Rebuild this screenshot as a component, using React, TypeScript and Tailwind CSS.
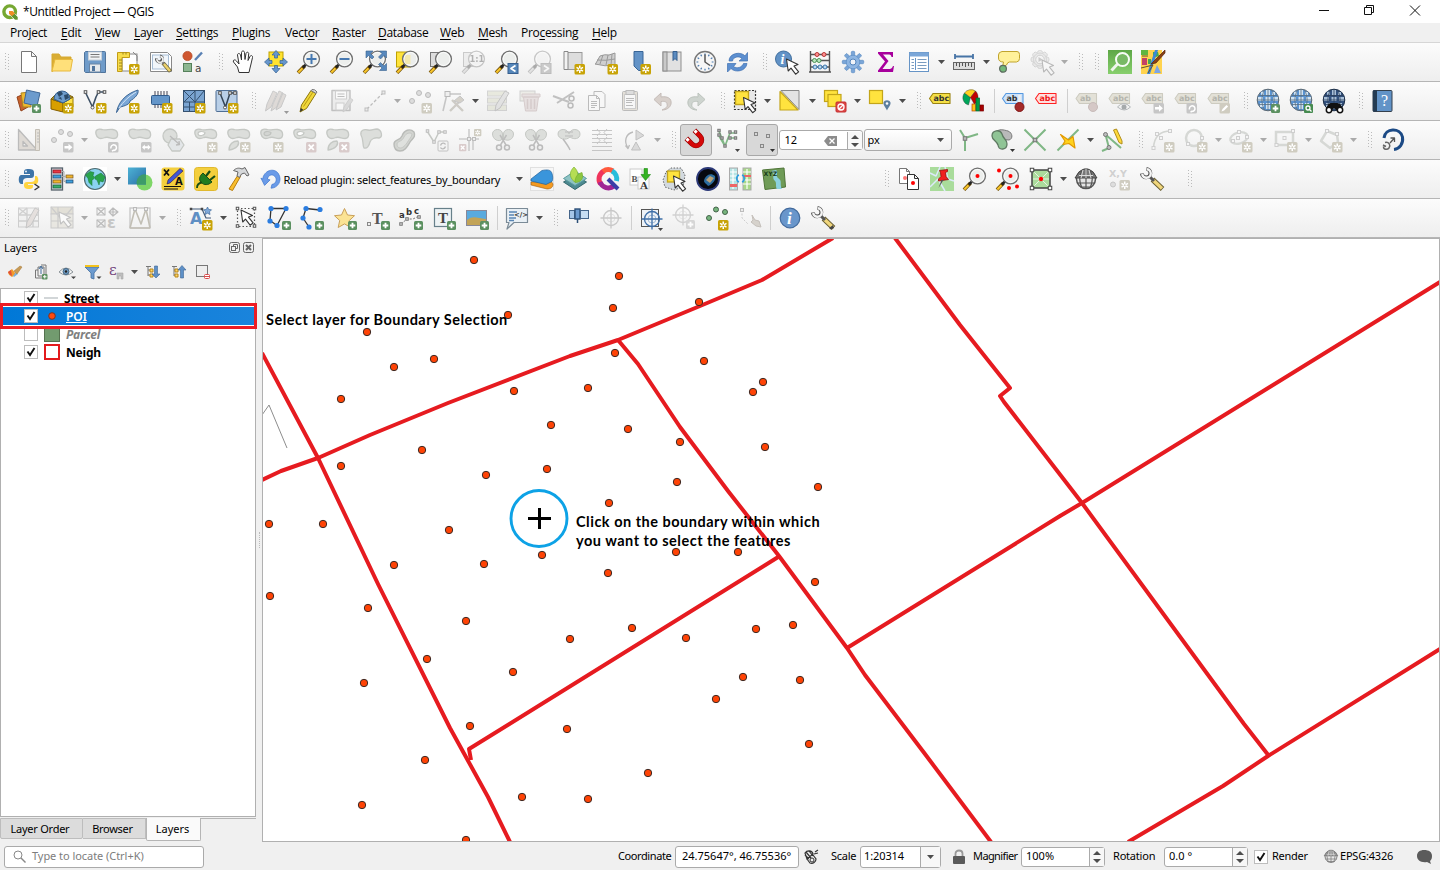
import React from "react";

type PProps = { d: string; f?: string; s?: string; w?: number; o?: number; dash?: string };
const P = ({ d, f = "none", s, w = 1, o, dash }: PProps) => (
  <path d={d} fill={f} stroke={s} strokeWidth={w} opacity={o} strokeDasharray={dash} strokeLinejoin="round" />
);
const C = ({ x, y, r, f = "none", s, w = 1 }: { x: number; y: number; r: number; f?: string; s?: string; w?: number }) => (
  <circle cx={x} cy={y} r={r} fill={f} stroke={s} strokeWidth={w} />
);
const R = ({ x, y, w, h, f = "none", s, r = 0, sw = 1 }: { x: number; y: number; w: number; h: number; f?: string; s?: string; r?: number; sw?: number }) => (
  <rect x={x} y={y} width={w} height={h} rx={r} fill={f} stroke={s} strokeWidth={sw} />
);
const T = ({ x, y, size, f = "#333", children, font = "DejaVu Sans", b = true, i = false }: { x: number; y: number; size: number; f?: string; children: string; font?: string; b?: boolean; i?: boolean }) => (
  <text x={x} y={y} fontSize={size} fill={f} fontFamily={`${font}, sans-serif`} fontWeight={b ? 700 : 400} fontStyle={i ? "italic" : "normal"}>{children}</text>
);

/* Badges in the lower right corner of an icon */
const Star = ({ off = false, x = 13, y = 14 }: { off?: boolean; x?: number; y?: number }) => (
  <g transform={`translate(${x} ${y})`}>
    <R x={0} y={0} w={10.5} h={10.5} r={1.5} f={off ? "#cfccc0" : "#c8a306"} />
    <P d="M5.25 1.5V9M2 3.4l6.5 3.7M8.5 3.4 2 7.1" s="#fff" w={1.5} />
    <C x={5.25} y={5.25} r={1} f={off ? "#cfccc0" : "#c8a306"} />
  </g>
);
const Plus = ({ off = false, x = 15, y = 15 }: { off?: boolean; x?: number; y?: number }) => (
  <g transform={`translate(${x} ${y})`}>
    <R x={0} y={0} w={9} h={9} r={1.5} f={off ? "#cfcfcf" : "#5b9060"} />
    <P d="M4.5 1.7v5.6M1.7 4.5h5.6" s="#fff" w={1.8} />
  </g>
);
const Badge = ({ k, x = 13, y = 14 }: { k: "arrow" | "turn" | "both" | "x" | "pen"; x?: number; y?: number }) => (
  <g transform={`translate(${x} ${y})`}>
    <R x={0} y={0} w={10.5} h={10.5} r={1.5} f={k === "x" ? "#d9cbcb" : k === "pen" ? "#cfccc0" : "#c6c6c6"} />
    {k === "arrow" && <P d="M1.5 4h4V1.8L9.4 5.3 5.5 8.7V6.5h-4z" f="#fff" />}
    {k === "turn" && <P d="M3 6.5a2.8 2.8 0 1 1 3 1.9M4 9.2l2-1.2" s="#fff" w={1.5} />}
    {k === "both" && <P d="M1 5.2 3.8 2.5v1.8h3V2.5l2.8 2.7-2.8 2.7V6.2h-3v1.7z" f="#fff" />}
    {k === "x" && <P d="M2.6 2.6l5.2 5.2M7.8 2.6 2.6 7.8" s="#fff" w={1.8} />}
    {k === "pen" && <P d="M2 8.5l1-2.5 4-4 1.6 1.6-4 4z" f="#fff" />}
  </g>
);
const Lens = ({ children, x = 14.5 }: { children?: React.ReactNode; x?: number }) => (
  <g>
    <P d="M1 22.8 7.5 16" s="#6b4a00" w={3.6} />
    <P d="M1.3 22.5 5.5 18.2" s="#f8c52c" w={2.2} />
    <P d="M6 17.500l3.300-3.400" s="#222" w={2.6} />
    <C x={x} y={9} r={7.9} f="#eceeec" s="#707070" w={1.4} />
    <C x={x} y={9} r={6.5} s="#fff" w={0.8} />
    {children}
  </g>
);
const Cursor = ({ x = 10, y = 8, f = "#fff", s = "#333" }: { x?: number; y?: number; f?: string; s?: string }) => (
  <g transform={`translate(${x} ${y})`}><P d="M0 0l1.700 12 2.800-2.800 4.600 6 3-2.300-4.600-5.800 4-1.700z" f={f} s={s} w={1.1} /></g>
);
const blob = "M1 6C0 2 3 .5 7 1.500c4 1.500 7-1 11 0 6 1 6 8.500 1 9-4 0-5-2-9-1-5 2-8 1-9-3.500z";
const Blob = ({ children }: { children?: React.ReactNode }) => (
  <g><P d={blob} f="#dcdedb" s="#c5c8c4" w={1.3} />{children}</g>
);
const Tag = ({ f = "#f5df46", s = "#9a8210", t = "#333", txt = "abc" }: { f?: string; s?: string; t?: string; txt?: string }) => (
  <g>
    <P d="M1.500 9.500 5 4.500h17v10H5z" f={f} s={s} w={1.1} />
    <T x={5.5} y={12.3} size={7.9} f={t}>{txt}</T>
  </g>
);
const Globe = ({ dark = false }: { dark?: boolean }) => (
  <g>
    <C x={12} y={11} r={10.8} f={dark ? "#33527f" : "#5a93d0"} s={dark ? "#1e3048" : "#5e6a73"} />
    <path d="M5 2.800h3v3H5zM10 1h4v5h-4zM16 3h3v3h-3zM2 8h5v4H2zM9.500 8h5v4h-5zM17 8h5v4h-5zM4 14h4v4H4zM10 14h4v6h-4zM16 14h4v3h-4z" fill={dark ? "#a8bfd8" : "#cfe2f2"} />
    <P d="M1 11h22M3 6.500h18M3 15.500h18M12 .5v21M8.500 1C5 8 5 14 8.500 21M15.500 1c3.500 7 3.500 13 0 20" s={dark ? "#2c405c" : "#596e80"} w={0.8} />
  </g>
);
const Wrench = ({ dark = false }: { dark?: boolean }) => (
  <g>
    <P d="M12.500 12.500 22.500 22" s="#665c30" w={5.2} />
    <P d="M13 13 22 21.500" s="#f0d67c" w={3.4} />
    <P d="M9 9l5 5" s="#555" w={3} />
    <P d="M1.800 6.500A4.300 4.300 0 1 0 6.500 1.800" s="#555" w={3.8} />
    <P d="M2.200 7A4.300 4.300 0 1 0 7 2.200" s="#f4f4f4" w={2.4} />
    {dark && <P d="M18 22l2 1.500 3-1.500-1-3z" f="#444" />}
  </g>
);
const Nodes = ({ pts, f = "#ececec", s = "#bdbdbd", z = 3 }: { pts: number[][]; f?: string; s?: string; z?: number }) => (
  <g>{pts.map(([x, y], i) => <R key={i} x={x - z / 2} y={y - z / 2} w={z} h={z} f={f} s={s} />)}</g>
);
const Snip = () => (
  <g>
    <P d="M1.500 6c0-6 10-6 10 0v5c-4 4-10 0-10-5zM12.500 6c0-6 10-6 10 0 0 5-5 8-10 5z" f="#dcdedb" s="#c5c8c4" />
    <P d="M15.500 7 9.500 17M9 7l6 10" s="#bdbdbd" w={1.5} />
    <C x={8} y={19.5} r={2.5} f="#eee" s="#bbb" w={1.5} /><C x={16} y={19.5} r={2.5} f="#eee" s="#bbb" w={1.5} />
  </g>
);
const Target = ({ s = "#3e6fa8" }: { s?: string }) => (
  <g><C x={12} y={12} r={7.500} s={s} w={1.300} /><C x={12} y={12} r={4} s={s} w={0.400} /><P d="M12 1.500v21M1.500 12h21" s={s} w={1.300} /></g>
);

const icons: Record<string, React.ReactNode> = {
  /* project */
  file: <P d="M4.500 1.500h10l5 5v16h-15zM14.500 1.500v5h5" f="#fff" s="#777" />,
  folder: <g><P d="M2 22V4h7l2 3h10v3" f="#d9ad34" s="#d7a92f" /><P d="M2 21 5 9.500h17.500L20.500 21z" f="#ffe07a" s="#e8b93c" /></g>,
  save: <g><P d="M2.500 1.500h19q1 0 1 1v20h-20l-1-1v-19z" f="#6f9bc9" s="#50749c" /><R x={5.500} y={2} w={13} h={8} f="#f1f3f5" s="#c9d1d9" /><P d="M7.500 4.500h9M7.500 7h9" s="#777" /><R x={6.500} y={14} w={11} h={8} f="#e6e9ec" s="#6985a5" /><R x={9} y={16} w={3} h={5} f="#50749c" /></g>,
  layoutNew: <g><R x={6} y={4} w={15} h={17} f="#fff" s="#888" /><P d="M1.500 2.500h12v5H6v14H1.500z" f="#f7dc4a" s="#c29c17" /><P d="M3 10h3M3 13h3M3 16h3M3 19h3M7 2.500v2M10 2.500v2" s="#8f7a20" w={0.9} /><P d="M17 2l4 4v5" s="#888" /><Star /></g>,
  layoutMgr: <g><P d="M1.500 2.500h17l4 4v15h-21z" f="#fff" s="#888" /><R x={3.500} y={5} w={16} h={14} f="#f1f6fb" s="#a7bdd5" /><P d="M14 13 21.500 21.500" s="#66603b" w={4} /><P d="M14.500 13.500 21 21" s="#eed36c" w={2.600} /><P d="M11 10l4 4" s="#777" w={2.200} /><P d="M7.500 8.500A3 3 0 1 0 11 6" s="#555" w={3} /><P d="M8 9A3 3 0 1 0 11.300 6.500" s="#eee" w={1.800} /></g>,
  style: <g><C x={5.500} y={6} r={4.600} f="#cf5730" s="#b0431f" w={0.700} /><P d="M13 10 20 2.500" s="#5981b4" w={2.400} /><R x={1.500} y={13.500} w={8} h={8} f="#8cb690" s="#55805a" /><T x={13} y={22} size={10.500} f="#444" b={false}>a</T></g>,
  /* navigation */
  hand: <P d="M8 22.500 6.500 17 2.500 12c-1-2 1.500-3 3-1l2.500 3L6.500 5c0-2 2.500-2 3 0l1 5V2.500c0-2 3-2 3 0l.5 7 1-6c.5-2 3-1.500 2.700.5L17 10.500l2-4c1-2 3-.5 2.500 1L20 14l-1 4-1 4.500z" f="#fff" s="#333" />,
  pan: <g><R x={5} y={2} w={14} h={14} f="#ffe22f" s="#bfa200" /><P d="M12 .5 16 5h-2.500v3h-3V5H8zM12 23l4-4.500h-2.500v-3h-3v3H8zM.5 12 5 8v2.500h3v3H5V16zM23.500 12 19 8v2.500h-3v3h3V16z" f="#6696cc" s="#356194" w={0.700} /></g>,
  zoomIn: <Lens><P d="M14.500 4v10M9.500 9h10" s="#4779b1" w={2} /></Lens>,
  zoomOut: <Lens><P d="M9.500 9h10" s="#4779b1" w={2} /></Lens>,
  zoomFull: <g><Lens x={14.500} /><P d="M3 1h7L7.500 3.500 11 7 9 9 5.500 5.500 3 8zM23.500 1h-7L19 3.500 15.500 7l2 2L21 5.500 23.500 8zM23.500 20.500h-7L19 18l-3.500-3.500 2-2L21 16l2.500-2.500z" f="#5788bd" s="#37618e" w={0.600} /></g>,
  zoomSel: <g><R x={.5} y={2} w={14} h={15} f="#ffe33b" s="#bfa200" /><Lens /><P d="M10 5h4.500v9H10q-3-4.500 0-9z" f="#f3e9b0" /></g>,
  zoomLayer: <g><R x={1.500} y={2.500} w={14} h={14} f="#ddd" s="#777" /><Lens /></g>,
  zoomNative: <g opacity={.35}><R x={1.500} y={2.500} w={14} h={14} f="#ddd" s="#777" /><g className="grayscale"><Lens><T x={7.500} y={12} size={8.300} f="#333">1:1</T></Lens></g></g>,
  zoomLast: <g><Lens /><R x={13} y={13.500} w={10} h={10} f="#5586b9" s="#365f8f" /><P d="M20.500 15.500 16 18.500l4.500 3" s="#fff" w={1.700} /></g>,
  zoomNext: <g opacity={.35} className="grayscale"><Lens /><R x={13} y={13.500} w={10} h={10} f="#5586b9" s="#365f8f" /><P d="M16 15.500 20.500 18.500l-4.500 3" s="#fff" w={1.700} /></g>,
  mapNew: <g><R x={6} y={2.500} w={15} h={17} f="#ddd" s="#999" /><P d="M3 1.500h4v18H3z" f="#f2f2f2" s="#888" /><Star x={13.500} /></g>,
  map3d: <g><P d="M1.500 14 6 6q5-2 9-1l6-2v12q-10 2-20-1z" f="#cfcfcf" s="#999" /><P d="M3 10q9 1 18-1M9 5 6 14M14 5l-2 10M18 4l-1 11" s="#9a9a9a" /><Star x={13.500} /></g>,
  bookmarkNew: <g><P d="M7 1.500h9v19h-4.500L7 16z" f="#6393c7" s="#386596" /><Star x={13.500} /></g>,
  bookmarks: <g><R x={3} y={2} w={18} h={19} f="#e1e1e1" s="#8d8d8d" /><R x={3} y={2} w={4} h={19} f="#c9c9c9" s="#8d8d8d" /><P d="M13 1.500h4v9l-2-2-2 2z" f="#5b8bc0" s="#345f8f" /></g>,
  clock: <g><C x={12} y={12} r={10.500} f="#f6f6f6" s="#777" w={1.400} />{[0, 30, 60, 90, 120, 150].map(a => <path key={a} d="M12 3.500v1.800M12 18.700v1.800" stroke="#4878ae" strokeWidth="1.200" transform={`rotate(${a} 12 12)`} />)}<P d="M12 4.500V12l5 3.500" s="#555" w={1.500} /></g>,
  refresh: <g><P d="M3 11C3 3 15 1 19 6l2.500-3.500V11H13l3-2.500C13 5.500 7 7 6.500 11zM21 13.500C20 21.500 9 23 5 18.500L1.500 22v-8.500H10L7.500 16.500C11 19 16 17.500 17.500 13.500z" f="#5c8fd0" s="#3f70b0" w={0.700} /></g>,
  /* attributes */
  identify: <g><C x={8.500} y={9} r={8} f="#6192c6" s="#44719f" /><T x={5.500} y={14} size={14} f="#fff" font="Liberation Serif" i>i</T><Cursor x={11.500} y={9} /></g>,
  abacus: <g><P d="M2.500 1v21.500M21.500 1v21.500M1 22h22M3 4.500h18M3 10.500h18M3 17h18" s="#555" w={1.400} />{[9, 16].map(x => <C key={x} x={x} y={4.500} r={2} f="#ff9090" s="#b63535" />)}{[6.500, 11].map(x => <C key={x} x={x} y={10.500} r={2} f="#b8e6bd" s="#4d9459" />)}{[7, 12, 17].map(x => <C key={x} x={x} y={17} r={2} f="#b9d8f1" s="#3b76ac" />)}</g>,
  gear: <g>{[0, 45, 90, 135].map(a => <rect key={a} x={10.300} y={1.300} width={3.400} height={21.400} rx={1} fill="#7ba6d8" stroke="#5385bd" strokeWidth={.6} transform={`rotate(${a} 12 12)`} />)}<C x={12} y={12} r={6.800} f="#8db5e2" s="#5f90c8" w={.8} /><C x={12} y={12} r={3} f="#f0f4f9" s="#5385bd" /></g>,
  sigma: <P d="M4 2h15v5h-1.500c-.5-2-1-2.500-4-2.500H9l5.500 6.500L8.500 19H14c3 0 4-.5 5-3h1l-1 6H4v-1.500l7-9L4 3.500z" f="#a7009c" />,
  table: <g><R x={2.500} y={2.500} w={19} h={19} f="#fff" s="#6694c6" /><R x={2.500} y={2.500} w={19} h={4} f="#7aa6d8" /><P d="M8.500 8v12" s="#6694c6" /><P d="M4.500 9.500H7M4.500 12.500H7M4.500 15.500H7M4.500 18.500H7M10.500 9.500h9M10.500 12.500h9M10.500 15.500h9M10.500 18.500h9" s="#7a9cc0" /></g>,
  measure: <g><P d="M2.500 6.500h19M3 4v5M21 4v5" s="#4774a6" w={1.800} /><R x={1.500} y={12.500} w={21} h={7} f="#ddd" s="#666" /><P d="M4.500 13v3M7.500 13v4M10.500 13v3M13.500 13v4M16.500 13v3M19.500 13v4" s="#555" /></g>,
  tip: <g><P d="M5 1.500h15q2.500 0 2.500 3v4q0 3-3 3.500h-7q-2 0-3 3l-4 2 1-5q-5 0-5-4v-3q0-3 3.500-3.500z" f="#fff19a" s="#c0a42e" /><C x={6} y={18.800} r={3.400} f="#72b879" s="#5d6b5f" w={1.200} /></g>,
  action: <g opacity={.3}>{[0, 45, 90, 135].map(a => <rect key={a} x={7.500} y={.5} width={5} height={18} rx={2} fill="#ccc" stroke="#777" strokeWidth={.8} transform={`rotate(${a} 10 9.500)`} />)}<C x={10} y={9.500} r={6.500} f="#ccc" s="#888" /><C x={10} y={9.500} r={4.300} f="#eee" s="#777" /><P d="M8.500 7v5l4-2.500z" f="#666" /><Cursor x={12} y={10} /></g>,
  osm: <g><defs><linearGradient id="gq" x2="0" y2="1"><stop stopColor="#5ea747" /><stop offset="1" stopColor="#87cf6d" /></linearGradient></defs><rect width="24" height="24" x="1" fill="url(#gq)" /><P d="M4.500 20.500 10.500 14" s="#eef6ec" w={3} /><C x={15.500} y={9.500} r={6.500} f="#78b965" s="#f7fcf6" w={2} /></g>,
  quickmap: <g transform="translate(1 0)"><rect width="21" height="24" fill="#ffd34e" /><path d="M0 0h7v5H0z" fill="#61b53f" /><path d="M1 8h5v7H1z" fill="#c34265" /><path d="M7 9h3v5H7zM12 2h5l1 4-6 2z" fill="#42a955" /><path d="M14 0h3l-4 12-4 12H6l4-12z" fill="#3d87d7" /><path d="M16 15l4 8h-7z" fill="#7da6e5" /><P d="M0 18 12 15 7 23M1 6h6" s="#65522f" /><P d="M24 0 13 11l-3 3 5-1L24 3z" f="#8b4113" s="#54230c" w={0.700} /></g>,
  /* data source */
  dsm: <g><P d="M0 8 7 5l4 13-7 4z" f="#c9632c" s="#93421c" /><P d="M4 4 13 3l1 15H6z" f="#efb92f" s="#ad8321" /><P d="M9.500 1 23 4l-3 13L7 14z" f="#6c9bcd" s="#3f6796" /><Plus x={15} y={15} /></g>,
  geopkg: <g><P d="M1 10 13 14v9L1 20z" f="#d89f00" s="#855f00" /><P d="M13 14 23 8v10l-10 5z" f="#ffe34b" s="#977800" /><P d="M1 10 5 6h14l4 2-10 6z" f="#b38f16" s="#7a6010" /><path d="M4 10a8 8 0 1 1 16 0l-7 4z" fill="#6d9ccc" stroke="#34608f" /><P d="M7 4l4-2 2 3-4 3zM14 6l4-1 1 4-4 2zM8 9l3-1 1 3z" f="#2c4a69" /><Star /></g>,
  shpNew: <g><P d="M2.500 3.500 9.500 18 13 8 15.500 3h6" s="#3d5065" w={1.600} /><Nodes pts={[[2.500, 3], [15.500, 3], [21.500, 3]]} f="#fff" s="#555" z={2.600} /><C x={9.500} y={18.500} r={1.500} f="#fff" s="#555" /><Star /></g>,
  feather: <g><P d="M.5 23.500C2 14 9 5 22 1c1 4-3 8-8 11 0 3-5 5-10 6z" f="#7ba7d6" s="#3c6695" /><P d="M3 19C7 13 13 7 20 3" s="#d5e5f5" /><Star /></g>,
  chip: <g><P d="M6 2v17M9 2v17M12 2v17M15 2v17M18 2v17" s="#445" w={1} /><R x={2.500} y={6.500} w={18} h={9} r={1} f="#6496ca" s="#315b8b" /><Star x={13} y={14} /></g>,
  mesh: <g><R x={1.500} y={1.500} w={21} h={21} f="#7ba5d2" s="#34506f" /><P d="M1.500 13h21M13 1.500v21M2 2l11 11M13 2 2 13M22 2 13 13M7.500 13v10M1.500 18h11" s="#34506f" w={1} /><Star /></g>,
  virtualLayer: <g><R x={1} y={1.500} w={21} h={21} r={1} f="#b9cfe7" s="#4f6f95" /><P d="M5 4l5.500 14L15 4h5" s="#345" w={1.500} /><Nodes pts={[[5, 4], [15, 4], [20, 4]]} f="#fff" s="#555" z={2.600} /><C x={10} y={18.500} r={1.500} f="#fff" s="#555" /><Star /></g>,
  /* digitizing */
  editsOff: <g><g opacity={.35}><P d="M1.500 22 3 15 9 2l4 2-6 14zM7 22l2-7 6-13 4 2-6 14zM12 21l2-7 4-10 4 2-5 12z" f="#b5aaa2" s="#777" /></g><P d="M20 22h5l-2.500 3z" f="#999" /></g>,
  pencil: <g><P d="M3 23 4.500 16 14 1.500l5 3L9.500 19.500z" f="#f0d73a" s="#8d760d" /><P d="M14 1.500l5 3 1-1.500q-2-3-5-2.500z" f="#ddd" s="#777" /><P d="M6.500 17.500 16 3" s="#b99b12" /><P d="M3 23l.8-4 2.500 1.800z" f="#333" /></g>,
  saveEdits: <g opacity={.35} className="grayscale"><P d="M2 1.500h18v20H2z" f="#ddd" s="#666" w={1.500} /><R x={5.500} y={2} w={11} h={8} f="#fff" s="#888" /><P d="M7.500 5h7M7.500 7.500h7" s="#555" /><R x={6} y={14} w={8} h={7} f="#fff" s="#888" /><P d="M13 23l1-5 6-9 3 2-6 9z" f="#aaa" s="#888" /></g>,
  line: <g><P d="M4 20 20 4" s="#bbb" w={1.300} dash="3 2" /><Nodes pts={[[3.500, 20.500], [20.500, 3.500]]} /></g>,
  points: <g><C x={11} y={4} r={2.500} f="#ddd" s="#bbb" /><C x={20} y={6} r={2.500} f="#ddd" s="#bbb" /><C x={4} y={12} r={2.500} f="#ddd" s="#bbb" /><Star off x={13.500} /></g>,
  vertex: <g opacity={.8}><P d="M2 22 6 5h14" s="#bbb" w={1.600} /><P d="M11 11 22 22M19 12 9 22" s="#c5c2bb" w={2.400} /><R x={4} y={2.500} w={5} h={5} f="#eee" s="#aaa" /><P d="M13 12l6-5 4 4-4 3z" f="#ccc8bf" s="#bbb" /></g>,
  formEdit: <g opacity={.45}><R x={1.500} y={2} w={19} h={5} f="#d5d7c0" s="#aaa" /><R x={1.500} y={9} w={19} h={5} f="#d5d7c0" s="#aaa" /><R x={1.500} y={16} w={19} h={5.500} f="#d5d7c0" s="#aaa" /><P d="M9 22l1-6 9-14 4 2-9 15z" f="#ccc" s="#888" /></g>,
  trash: <g opacity={.5}><R x={1} y={2} w={15} h={10} f="#e2e2d8" s="#aaa" /><P d="M4.500 8h15l-2 14h-11zM3 5h18v3H3z" f="#d9cccc" s="#b8a4a4" /><P d="M8.500 10v10M12 10v10M15.500 10v10" s="#b8a4a4" w={1.500} /></g>,
  cut: <g><P d="M1 7l16 6M5 14 22 3" s="#c1c1c1" w={2} /><C x={19.500} y={9.500} r={2.500} s="#bbb" w={1.500} /><C x={18.500} y={16.500} r={2.500} s="#bbb" w={1.500} /></g>,
  copy: <g><P d="M9 2.500h8l3 3v13H9z" f="#f7f7f7" s="#bbb" /><P d="M3.500 6.500h8l3 3v12h-11zM11.500 6.500v3h3" f="#f7f7f7" s="#bbb" /><P d="M6 12.500h6M6 14.500h6M6 16.500h6M6 18.500h4" s="#bbb" /></g>,
  paste: <g><R x={4.500} y={2.500} w={15} h={19} r={1} f="#e4e0d8" s="#bbb" /><R x={6.500} y={5.500} w={11} h={14} f="#f7f7f7" s="#ccc" /><R x={8} y={1.500} w={8} h={4} f="#ddd" s="#bbb" /><P d="M8 9.500h8M8 11.500h8M8 13.500h6M8 16.500h7" s="#bbb" /></g>,
  undo: <P d="M3 10.500 10 4v4c6-1 11 1 10 7-1 4-5 6-9 6 4-2 6-3 5-6 0-2-2-3-6-2.500v4.500z" f="#d8d0cb" s="#c4bcb8" />,
  redo: <P d="M21 10.500 14 4v4C8 7 3 9 4 15c1 4 5 6 9 6-4-2-6-3-5-6 0-2 2-3 6-2.500v4.500z" f="#ced4cf" s="#bcc3bd" />,
  /* selection */
  select: <g><R x={1.500} y={1.500} w={21} h={19} f="#e8e8e8" /><rect x={1.500} y={1.500} width={21} height={19} fill="none" stroke="#333" strokeDasharray="2 1.500" strokeWidth={1.200} /><R x={2.500} y={2.500} w={13} h={13} f="#ffe33e" s="#c3a51a" sw={1.400} /><Cursor x={10.500} y={8.500} /></g>,
  selectValue: <g><P d="M3 1.500h18v19z" f="#e3e3e3" s="#888" /><P d="M2 2.500 20 21H2z" f="#ffe33e" s="#c3a51a" w={1.200} /></g>,
  deselect: <g><R x={1.500} y={1.500} w={13} h={11} f="#ffe33e" s="#c3a51a" sw={1.200} /><R x={5} y={5.500} w={13} h={12} f="#ffe33e" s="#c3a51a" sw={1.200} /><R x={13} y={13} w={10} h={10} r={1} f="#df4747" s="#c22f2f" /><C x={18} y={18} r={3} s="#fff" w={1.300} /><P d="M16 20l4-4" s="#fff" w={1.300} /></g>,
  selectLoc: <g><R x={1.500} y={1.500} w={13} h={13} f="#ffe33e" s="#c3a51a" sw={1.200} /><P d="M19 21.500c-1-3-4-5-3.500-8 1-3 6-3 7 0 .5 3-2.500 5-3.500 8z" f="#5d7f9f" /><C x={19} y={14.500} r={1.300} f="#fff" /></g>,
  /* labels */
  label: <g transform="translate(-1 0)"><Tag /></g>,
  diagram: <g><P d="M8.500 8.500 2.500 4a7.500 7.500 0 0 0 4 12z" f="#00a65a" s="#333" w={.4} /><P d="M8.500 8.500 2.500 4a8 8 0 0 1 11-2z" f="#ffd21f" s="#333" w={.4} /><P d="M8.500 8.500l5-6.500c4 4 3 10-1 13.500z" f="#c40000" s="#333" w={.4} /><R x={10} y={15} w={3.500} h={7} f="#ffc415" s="#b40" sw={.7} /><R x={14} y={9} w={3.500} h={13} f="#009a43" s="#063" sw={.7} /><R x={18} y={16} w={3.500} h={6} f="#a80000" s="#700" sw={.7} /></g>,
  labelPin: <g transform="translate(-1 0)"><Tag f="#cfe3f9" s="#5598e0" txt="ab" /><P d="M18.500 6v10" s="#eee" w={2.500} /><C x={18.500} y={18} r={4.500} f="#a52929" s="#7e1515" /></g>,
  labelRed: <g transform="translate(-1 0)"><Tag f="#ffdede" s="#f22" t="#f01818" /></g>,
  /* web and help */
  globeAdd: <g><Globe /><Plus x={15} y={15} /></g>,
  globeSearch: <g><Globe /><R x={15} y={15} w={9} h={9} r={1} f="#468b50" /><C x={19} y={19} r={2} s="#fff" w={1.300} /><P d="M20.500 20.500l2 2" s="#fff" w={1.300} /></g>,
  globeBino: <g><Globe dark /><P d="M4 22c0-5 3-8 5-8h6c3 0 6 3 5 8l-6-1-2-2-2 2z" f="#111" /><C x={7} y={21} r={2.700} f="#fff" s="#111" w={1.500} /><C x={18} y={21} r={2.700} f="#fff" s="#111" w={1.500} /></g>,
  help: <g><R x={2} y={1.500} w={19} h={21} r={1} f="#6293c7" s="#333f4c" /><R x={2} y={1.500} w={4} h={21} f="#243b52" /><T x={10} y={17} size={16} f="#fff" font="Liberation Serif" b={false}>?</T></g>,
  /* advanced digitizing */
  setSquare: <g><P d="M1.500 1.500 20 22H1.500zM6 13.500v4.500h4.500z" f="#dedad5" s="#bbb" w={1.300} /><P d="M18.500 1.500h4v21h-4z" f="#e5e1da" s="#c3beb5" /><P d="M20 5h2M20 8h2M20 11h2M20 14h2" s="#bbb" /></g>,
  movePts: <g><C x={11} y={4} r={2.500} f="#ddd" s="#bbb" /><C x={20} y={6} r={2.500} f="#ddd" s="#bbb" /><C x={4} y={12} r={2.500} f="#ddd" s="#bbb" /><Badge k="arrow" /></g>,
  rotate: <Blob><Badge k="turn" /></Blob>,
  scale: <Blob><Badge k="both" /></Blob>,
  simplify: <g><C x={9} y={8} r={7} f="#dcdedb" s="#c5c8c4" w={1.300} /><P d="M10 11h9l4 6-4 6h-8l-4-6z" f="#e3e6e8" s="#c5c8c4" w={1.300} /><P d="M9 8l9 8M15 17l3.500-.5L18 13" s="#bbb" w={1.300} /></g>,
  ringAdd: <Blob><P d="M4 6c0-3 4-3 7-1.500 0 3-6 4.500-7 1.500z" f="#fff" s="#c5c8c4" w={1.200} /><Star off /></Blob>,
  partAdd: <Blob><P d="M2 22c0-6 4-9 9-9 2 3-1 8-9 9z" f="#dcdedb" s="#c5c8c4" w={1.300} /><Star off /></Blob>,
  ringFill: <Blob><P d="M4 6c0-3 4-3 7-1.500 0 3-6 4.500-7 1.500z" f="#d3d5d2" s="#c0c3bf" w={1.200} /><Star off /></Blob>,
  ringDel: <Blob><P d="M4 6c0-3 4-3 7-1.500 0 3-6 4.500-7 1.500z" f="#fff" s="#c5c8c4" w={1.200} /><Badge k="x" /></Blob>,
  partDel: <Blob><P d="M2 22c0-6 4-9 9-9 2 3-1 8-9 9z" f="#dcdedb" s="#c5c8c4" w={1.300} /><Badge k="x" /></Blob>,
  reshape: <P d="M2 7C1 2 5 1 9 2c4 1 5-1 9-1 5 1 6 8 2 9-4-1-8 1-9 4-1 4-3 7-6 6-2-4 0-8-3-13z" f="#dcdedb" s="#c5c8c4" w={1.300} />,
  offset: <g><P d="M2 16c0-5 6-3 8-8 2-6 8-8 12-4 2 5-1 6-4 10-3 5-5 9-10 9-4 0-6-3-6-7z" f="#d2d4d0" s="#b9bbb8" w={1.400} /><P d="M5 16c0-3 5-2 7-7 2-4 6-5 8-3 0 3-3 5-5 9-3 4-5 5-7 5s-3-2-3-4z" f="#dfe1de" s="#c5c7c4" /></g>,
  reverse: <g><P d="M2 3l7 11 5-10h6" s="#c5c8c4" w={1.500} /><Nodes pts={[[2.500, 3], [14, 4], [20, 4], [9, 14]]} z={2.500} /><R x={13} y={13} w={10} h={10} r={1} f="#f3f3f3" s="#c2c2c2" /><P d="M15.500 17.500c1-3 4-3 5-1M20.500 18.500c-1 3-4 3-5 1" s="#bbb" w={1.400} /></g>,
  trim: <g><P d="M11 1v22M1 11h20M15 11v11" s="#ccc" w={1.600} /><Nodes pts={[[11, 11], [16, 11]]} /><g transform="translate(16 1) scale(.7)"><Star off x={0} y={0} /></g><g transform="translate(1 16) scale(.7)"><Badge k="x" x={0} y={0} /></g></g>,
  split: <Snip />,
  splitParts: <Snip />,
  merge: <g><P d="M1 6c0-6 10-6 11 0 1-6 11-6 11 0 0 5-6 6-10 3-4 4-12 2-12-3z" f="#dcdedb" s="#c5c8c4" /><P d="M8 4h8M8 8h8" s="#bbb" /><P d="M6 11q6 8 7 11" s="#bbb" w={1.500} /></g>,
  mergeAttr: <P d="M2 2.500h20M2 6.500h20M2 10.500h20M2 14.500h20M2 18.500h20M2 22.500h20M7 1l3 3.500L7 8M17 1l-3 3.500L17 8M7 9l3 3.500L7 16M17 9l-3 3.500 3 3.500" s="#c6c6c6" />,
  rotateSym: <g><P d="M13 2l8 5.500-8 4.500zM13 14l4.500 8h-9z" f="#dadada" s="#c0c0c0" /><P d="M10 4C2 6 1 14 5 20M2.500 17.500 5 20.500 6.500 17" s="#bbb" w={1.300} /></g>,
  /* snapping */
  magnet: <g transform="rotate(-45 12 12)"><P d="M6.300 4v8a5.700 5.700 0 0 0 11.400 0V4" s="#8a0000" w={5} /><P d="M6.300 4.500V12a5.700 5.700 0 0 0 11.400 0V4.500" s="#d40808" w={4} /><path d="M4.800 4.300h3v3h-3zM16.200 4.300h3v3h-3z" fill="#fff" /></g>,
  snapV: <g><P d="M3 3l6 15 5-13h7M3 8l6 10M14 10h7" s="#7fb785" w={1.700} /><Nodes pts={[[3, 2.500], [3, 7], [6, 10], [14, 4], [19.500, 4], [14, 10], [19.500, 10], [9, 18]]} f="#bbb" s="#777" z={2.400} /><P d="M19 21h5l-2.500 3z" f="#444" /></g>,
  snapPts: <g><Nodes pts={[[6, 6], [18, 8], [12, 18]]} f="#d5d5d5" s="#888" z={3} /><P d="M20 21h5l-2.500 3z" f="#333" /></g>,
  topo: <g><P d="M3 2l5 8 13-4M8 10v13" s="#7fb785" w={2} /><Nodes pts={[[8, 10.500]]} f="#bbb" s="#777" z={3.500} /></g>,
  overlap: <g><P d="M6 5C8 0 14 2 18 3c5 2 5 8 1 9-5 0-8-2-12-2z" f="#b9b9b9" s="#777" /><P d="M2 8c0-6 8-7 10-2 1 5 5 5 5 10 0 6-8 7-9 1-1-4-6-5-6-9z" f="#8fc495" s="#5f7a62" w={1.300} /><P d="M20 21h5l-2.500 3z" f="#333" /></g>,
  intersect: <g><P d="M1.500 1.500 22.500 22.500M22.500 1.500 1.500 22.500" s="#7fb785" w={2} /><Nodes pts={[[12, 12]]} f="#bbb" s="#777" z={3.500} /></g>,
  trace: <g><P d="M22.500 1.500 1.500 22.500" s="#7fb785" w={2} /><P d="M4.500 6.500 12.500 12 17 8.500 19 20 13 15.500 7 16.500 9 13z" f="#ffd21d" s="#e39a00" w={1.200} /></g>,
  selfSnap: <g><P d="M1 23 8 20 4.500 6.500 20 20" s="#7fb785" w={2} /><C x={4.500} y={6.500} r={2} f="#bbb" s="#777" /><C x={8} y={19.500} r={2} f="#bbb" s="#777" /><P d="M12.500 2l3-1 5.500 12 0 3-3-1.500z" f="#ffda3b" s="#b08d1b" /></g>,
  arcOff: <g><P d="M2.500 20C3 9 8 3 20 3" s="#d3d5d2" w={1.600} /><Nodes pts={[[2.500, 20], [6, 6], [19, 3], [10, 10]]} f="#f5f5f5" s="#cfcfcf" /><Star off /></g>,
  circleOff: <g><C x={10} y={10} r={8} s="#d6d8d5" w={2.500} /><Nodes pts={[[4, 16], [18, 10]]} f="#f5f5f5" s="#cfcfcf" /><Star off /></g>,
  ellipseOff: <g><ellipse cx="10" cy="10" rx="9" ry="5.500" fill="none" stroke="#d6d8d5" strokeWidth="2.200" transform="rotate(-15 10 10)" /><Nodes pts={[[9, 10], [4, 13], [10, 4], [18, 9]]} f="#f5f5f5" s="#cfcfcf" /><Star off /></g>,
  rectOff: <g><R x={2} y={4} w={17} h={13} s="#d6d8d5" sw={2.500} /><Nodes pts={[[10.500, 10], [19, 3], [2.500, 17]]} f="#f5f5f5" s="#cfcfcf" /><Star off /></g>,
  polyOff: <g><P d="M8 3 18 7l1 7-8 6L2 13z" s="#d6d8d5" w={2.500} /><Nodes pts={[[8, 3], [18, 6]]} f="#f5f5f5" s="#cfcfcf" /><Star off /></g>,
  circular: <g transform="translate(1 0)"><P d="M3 10C4 0 19-1 21.500 9c1 7-3 12-8.500 12.500" s="#1c4a85" w={3} /><P d="M9 15l4-4.500M9.500 10h4v4" s="#555" w={1.300} /><P d="M2 17l3 1.500M4 14.500c4-1 6 3 4 5.500M2.500 18.500c0 3.500 4 3.500 5.500 1.500" s="#666" w={1.500} /></g>,
  /* plugins row */
  python: <g><P d="M12 2c-5 0-5 1-5 5h6v1H4c-3 0-3 9 0 9h2v-3c0-2 2-3 4-3h4c2 0 3-1 3-3V5c0-2-2-3-5-3z" f="#3d74a8" /><C x={9} y={4.500} r={.9} f="#fff" /><P d="M11 22c5 0 5-1 5-4h-5v-1h8c3 0 3-8 0-8h-1v3c0 2-2 3-4 3h-4c-2 0-3 1-3 3v1c0 2 2 3 4 3z" f="#ffd43f" /><P d="M17.500 17l4.500 3-4.500 3" s="#333" w={1.400} /></g>,
  modeler: <g><R x={1.500} y={1} w={11} h={22} f="#d9dee3" s="#56616b" sw={1.300} /><R x={3} y={3} w={8} h={3} f="#e63946" s="#812" sw={.7} /><R x={3} y={8} w={8} h={3} f="#3ea0dd" s="#246" sw={.7} /><R x={3} y={13} w={8} h={3} f="#f1b52b" s="#752" sw={.7} /><R x={3} y={18} w={8} h={3} f="#39ad6a" s="#153" sw={.7} /><R x={16} y={8} w={7} h={3} f="#f1b52b" s="#752" sw={.7} /><R x={16} y={13} w={7} h={3} f="#3ea0dd" s="#246" sw={.7} /><P d="M11 4.500h3v5h2M11 9.500h3v5h2" s="#aaa" /></g>,
  earth: <g><rect width="24" height="24" fill="#fff" /><C x={12} y={12} r={10.500} f="#8ad3f0" s="#4f6b70" w={1.200} /><P d="M2.500 8 7 4.500l4 1-1 3 2 2-3 3 0 5-3-3-1-4zM12.500 9l5.500-3 4 4-2 5-3-1-1 4-2-5-2-1z" f="#28a34b" s="#167535" w={.5} /></g>,
  buffer: <g><defs><linearGradient id="gb" x2="1" y2="1"><stop stopColor="#4db3d6" /><stop offset="1" stopColor="#2b6da5" /></linearGradient></defs><C x={16.500} y={15.500} r={8} f="#7ed667" /><rect x="0" y=".5" width="18" height="17" fill="url(#gb)" /><P d="M8.500 15.500a8 8 0 0 1 9.500-8v10H9z" f="#3d9c69" /></g>,
  xyA: <g><R x={.5} y={.5} w={23} h={23} r={3} f="#f4cf3d" /><P d="M3 2.500l5 6M8 2.500 3 8.500" s="#111" w={1.800} /><P d="M6 17l1-4L19 1.500l3 2.500L9 16z" f="#4056d6" s="#203" w={.5} /><T x={14} y={18} size={10} f="#111">A</T><P d="M3 19.500h17M3 22h14" s="#111" w={1.200} /></g>,
  plug: <g><R x={.5} y={.5} w={23} h={23} r={3} f="#f4cf3d" s="#e0b92f" /><P d="M9 6l9 9-3 2c-4 1.500-7 0-9-3C5 11 6 8.500 9 6z" f="#217c20" s="#174d15" /><P d="M12 9l4-5M16 13l5-4" s="#174d15" w={2.200} /><P d="M3 21c0-3 1-5 5-5.500" s="#174d15" w={1.800} /></g>,
  hammer: <g><P d="M2 22 11 8l2.500 1.500L5.500 23.500z" f="#f9be2e" s="#b87d0d" /><P d="M6.500 3.500C9 1 12 .5 15 2l3-1.500L22 8l-2 1-2.500-3-3 1-2 3.500-2.500-1.500 1-4z" f="#d6d8da" s="#666" /></g>,
  reload: <P d="M3 12C4 3 15-1 20 6c5 8-1 16-8 16l1-4c5-1 6-6 3-9-3-3-7-1-8 3l3 1-6 6-4-8z" f="#6a9be8" s="#4279cf" w={.8} />,
  stackBO: <g><R x={.5} y={.5} w={23} h={23} s="#e0e0e0" f="#f7f7f7" /><P d="M1 15l20-1 2 3c0 4-3 5-6 5L1 18z" f="#f49a20" s="#9a5a10" w={.6} /><P d="M1 12 12 3.500c5-1 9-1 10 3 1 3 1 6 0 8l-6 3L1 14z" f="#3a95db" s="#1e609c" w={.7} /></g>,
  leaf: <g><P d="M.5 15 12 8l11.500 7L12 22.500z" f="#4d8a91" s="#34686e" /><P d="M.5 11.500 12 4l11.500 7.500L12 18.500z" f="#8fc3c4" s="#5c9da1" /><P d="M11.500 15C5 9 7 4 11 0c5 5 5 9 .5 15z" f="#b5dd54" s="#74ad24" w={.6} /><P d="M12 15.500c0-6 3-9 7-10 2 6-1 10-7 10z" f="#8cc63f" s="#74ad24" w={.6} /></g>,
  qpink: <g fill="none" strokeWidth="5"><path d="M4.500 17A9 9 0 0 1 8 4" stroke="#f0345c" /><path d="M7 4.500A9 9 0 0 1 17 4" stroke="#ff5a3e" /><path d="M16 4a9 9 0 0 1 4.500 10" stroke="#28bedb" /><path d="M4 15a9 9 0 0 0 14 4" stroke="#a02694" /><path d="M12 12l10 10" stroke="#3a3fa8" strokeWidth="4" /></g>,
  bToA: <g><R x={1} y={2} w={12} h={16} f="#fff" s="#ccc" /><R x={9} y={10} w={11} h={12} f="#fafafa" s="#ccc" /><T x={2.500} y={15} size={9} f="#555" font="Liberation Serif">B</T><T x={11} y={21.500} size={11} f="#333" font="Liberation Serif">A</T><P d="M15 1.500h3.500v6h3l-5 6-4.500-6h3z" f="#33b321" s="#1b8a10" w={.6} /></g>,
  selBoundary: <g><P d="M4 5 9 1h10l4 7-2 12-9 3-9-3-2-7z" f="#d2d9df" s="#555" dash="1.500 1.500" w={.9} /><R x={5.500} y={4} w={12} h={11} f="#ffe33e" s="#c3a51a" sw={1.300} /><Cursor x={11.500} y={9} /></g>,
  space: <g transform="translate(1 0)"><C x={12} y={12} r={11} f="#06090f" s="#2c3978" w={1.800} /><P d="M8 14c1-5 6-9 11-5 1 4-2 8-7 10-1-2-4-3-4-5z" f="#2c6c9e" /><P d="M10 13l4-4 4 2-4 5z" f="#b9a27a" /></g>,
  columns: <g transform="translate(1 0)"><R x={.5} y={1} w={8} h={22} f="#b5e4e4" s="#aaa" /><R x={14} y={1} w={8} h={22} f="#a8d888" s="#aaa" /><P d="M1 5h7M1 9h7M1 13h7M14 5h8M14 9h8M14 13h8M14 17h8M4 2v20M18 2v20" s="#fff" w={1.200} /><path d="M1 17h7v3H1zM14 8h8v2h-8z" fill="#e66" /><P d="M10 8c-3 1-3 6 0 7M13 8c3 1 3 6 0 7" s="#2b9fe0" w={1.600} /></g>,
  xyz: <g transform="translate(1 0)"><P d="M.5 3 22 1l1.500 19L3 22.500z" f="#6f9b57" s="#4f7437" /><P d="M9 4c5 2 0 7 4 10 2 2 0 6 2 8h5c-3-5 1-8-4-11-3-3 1-6-2-8z" f="#8cd2df" /><T x={1.500} y={9} size={6.200} f="#173c17">XYZ</T></g>,
  copyPts: <g><P d="M2.500 1.500h7l3 3v12h-10zM9.500 1.500v3h3" f="#fff" s="#777" /><P d="M10.500 7.500h7l4 4v11h-11zM17.500 7.500v4h4" f="#fff" s="#333" /><C x={8} y={11} r={2} f="#f77" /><C x={16} y={16} r={2} f="#f00" /></g>,
  pinMap: <g><rect width="24" height="24" fill="#a9dc9b" /><P d="M0 6l6 3 4-9M0 20l8-8 7 12M15 0l3 12 6 2" s="#dceafa" w={1.500} /><P d="M9.500 3.500l8-1 0 2-2 1 .5 4 2.500 3-10 1.500 0-2 2.500-2.500-.5-4z" f="#f01f1f" s="#980a0a" w={.8} /><P d="M11.500 13l-3 8 5-8z" f="#555" /></g>,
  zoomPt: <Lens><C x={14.500} y={9} r={2} f="#f00" /></Lens>,
  zoomPts: <g><Lens><C x={14.500} y={9} r={2} f="#f00" /></Lens><C x={3} y={3.500} r={2} f="#f00" /><C x={13} y={21} r={2} f="#f00" /><C x={21} y={19.500} r={2} f="#f00" /></g>,
  extent: <g><R x={3} y={3} w={18} h={18} f="#abdb9c" s="#444" sw={1.500} /><P d="M5 5l14 14M19 5 5 19M4 12h16" s="#e8f3e3" /><Nodes pts={[[3, 3], [21, 3], [3, 21], [21, 21]]} f="#fff" s="#444" z={3.500} /><C x={12} y={12} r={2.200} f="#f00" /></g>,
  wire: <g><C x={12} y={12} r={9.500} f="#e5e5e5" s="#555" w={1.500} /><P d="M1 11 5 5l5-3h4l5 3 4 6z" f="#777" s="#444" /><P d="M3 16h18M6 20h12M12 2v20M8 3C5 9 5 15 8 21M16 3c3 6 3 12 0 18" s="#555" w={1.200} /><P d="M5 8.500h14M9 3 7 11M15 3l2 8M12 2v9" s="#ddd" /></g>,
  xyOff: <g><T x={2} y={10} size={9.500} f="#d0d0d0">X,Y</T><C x={6} y={17.500} r={2.500} f="#ddd" s="#c5c5c5" /><Star off x={12.500} y={13} /></g>,
  wrench: <Wrench />,
  wrenchDark: <Wrench dark />,
  /* mesh, annotation */
  meshEdit: <g opacity={.5}><R x={1.500} y={2} w={20} h={19} f="#eee" s="#aaa" /><P d="M1.500 9h20M1.500 15h20M10 2v19M1.500 2l9 7M10 2 1.500 9M16 9v12" s="#aaa" w={1.300} /><P d="M9 22l1-6 8-14 4 2-8 15z" f="#d4cac6" s="#999" /></g>,
  meshSel: <g opacity={.55}><R x={1} y={1} w={22} h={7} f="#d2cebe" s="#aaa" /><R x={1} y={8} w={22} h={14} f="#e0ded4" s="#aaa" /><P d="M1 1l11 13L23 1M8 1v21M1 15h22" s="#aaa" w={1.200} /><Cursor x={9} y={6} s="#999" /></g>,
  meshE: <g><R x={2} y={2} w={8} h={7} s="#bbb" /><P d="M2 2l8 7M10 2 2 9M14 6l4-4 5 4-5 4zM14 6h9M18 2v8" s="#bbb" w={1.200} /><R x={2} y={14} w={8} h={7} s="#bbb" /><P d="M2 14l8 7M10 14l-8 7" s="#bbb" w={1.200} /><T x={12} y={22} size={16} f="#c6c6c6">ε</T></g>,
  meshV: <g><R x={2} y={2} w={20} h={20} s="#c5c5c5" sw={1.300} /><P d="M2 22 7 3l6 15 5-15 4 19M2 22h20" s="#c2bfb5" w={1.600} /><Nodes pts={[[7, 3], [18, 3]]} f="#eee" s="#bbb" /></g>,
  annLayer: <g><T x={1} y={18} size={16} f="#5f8fc4">A</T><P d="M2 3h11l4 9h5" s="#435b78" w={1.200} /><Nodes pts={[[2, 3], [13, 3]]} f="#666" s="#444" z={1.500} /><P d="M18.500 1l1.200 2.500 2.800.3-2 2 .5 2.700-2.500-1.300L16 8.500l.5-2.700-2-2 2.800-.3z" f="#7ea8d8" s="#406a9b" w={.7} /><Star /></g>,
  annSel: <g><rect x={3.500} y={2.500} width={17} height={18} fill="none" stroke="#555" strokeDasharray="1.500 2" strokeWidth={1.200} /><Nodes pts={[[3.500, 2.500], [20.500, 2.500], [3.500, 20], [20.500, 20]]} f="#fff" s="#555" z={2.500} /><Cursor x={7} y={4} /></g>,
  annPoly: <g><P d="M4 2.500h15l-9 17-7-5z" s="#333" w={1.300} /><g fill="#2b7de0"><circle cx="4" cy="2.500" r="2.600" /><circle cx="19" cy="2.500" r="2.600" /><circle cx="3" cy="15" r="2.600" /><circle cx="10" cy="19.500" r="2.600" /></g><Plus /></g>,
  annLine: <g><P d="M20 4 6 2.500 3 12l6 9" s="#333" w={1.300} /><g fill="#2b7de0"><circle cx="6" cy="2.500" r="2.600" /><circle cx="20" cy="3.500" r="2.600" /><circle cx="3" cy="12" r="2.600" /><circle cx="9" cy="21" r="2.600" /></g><Plus /></g>,
  annStar: <g><P d="M11.500 2.500l3 6.500 7 .7-5.200 4.800 1.500 7-6.300-3.600L5.200 21.500l1.500-7L1.500 9.700l7-.7z" f="#fbe394" s="#c9a05a" /><Plus /></g>,
  annText: <g><T x={6} y={18} size={16} f="#555" font="Liberation Serif">T</T><R x={1.500} y={16.500} w={3} h={3} f="#eee" s="#888" /><Plus /></g>,
  annCurve: <g><T x={0} y={12} size={8.500} f="#333">a</T><T x={7} y={9} size={8.500} f="#333">b</T><T x={15} y={8} size={8.500} f="#333">c</T><P d="M2 18 8 13h6l6-3" s="#777" dash="2 1.500" /><Nodes pts={[[2, 18], [8, 13], [20, 11]]} f="#ddd" s="#777" z={2.500} /><Plus /></g>,
  annBox: <g><R x={2.500} y={2.500} w={17} h={18} f="#eef3f5" s="#67808a" sw={1.200} /><T x={6} y={17} size={15} f="#444" font="Liberation Serif">T</T><Plus /></g>,
  annPic: <g><R x={1.500} y={4.500} w={20} h={15} f="#59aade" s="#889" /><P d="M2 14c6-5 10-2 19-1v6H2z" f="#c2a357" /><Plus /></g>,
  annHtml: <g><P d="M1.500 2.500h21v14H9l-7 6.500 2-6.500H1.500z" f="#e9f0f5" s="#7b8b97" w={1.200} /><P d="M4 6h8M4 9h5M4 12h7M4 14.500h5" s="#5885b4" w={1.300} /><T x={9} y={11} size={6.800} f="#333">&lt;/&gt;</T></g>,
  gps1: <g transform="translate(1 0)"><R x={2.500} y={4.500} w={5} h={8} f="#a6c6e8" s="#45658a" /><R x={8} y={3} w={5} h={10} f="#6c9bd0" s="#2d5078" sw={1.400} /><R x={13.500} y={4.500} w={8} h={8} f="#c7ddf2" s="#45658a" /><P d="M10.500 13v4" s="#2d5078" w={1.500} /></g>,
  targetOff: <Target s="#c8c8c8" />,
  targetBox: <g><R x={2.500} y={3.500} w={17} h={17} f="#edf2f7" s="#555" /><g transform="translate(1 1)"><Target /></g><P d="M19 22h5l-2.500 3z" f="#444" /></g>,
  targetAdd: <g opacity={.8}><g transform="translate(-1 -3)"><Target s="#c8c8c8" /></g><Plus off x={14} y={14} /></g>,
  gpsPts: <g><C x={11} y={3.500} r={2.500} f="#77b57e" s="#44634a" /><C x={20} y={6} r={2.500} f="#77b57e" s="#44634a" /><C x={4} y={12} r={2.500} f="#77b57e" s="#44634a" /><Star /></g>,
  gpsTrack: <g><P d="M4 4v8l6 6" s="#ccc" dash="2 1.500" /><Nodes pts={[[4, 4]]} /><P d="M14 9l3 5 4 1 2 6-5-1-5-4 2-2z" f="#d6d2cc" s="#c5c0bb" /></g>,
  info: <g><C x={12} y={12} r={9.800} f="#6996cb" s="#426a9c" w={1.200} /><T x={9} y={18} size={17} f="#fff" font="Liberation Serif" i>i</T></g>,
};
const dimLabels: [string, React.ReactNode][] = [
  ["lab1", <C key="a" x={18.500} y={18} r={4.500} f="#d5c8c6" s="#c8bcba" />],
  ["lab2", <g key="b"><P d="M10 18q6-7 13 0-6 6-13 0z" f="#f1f1f1" s="#b5b9bb" /><C x={16.500} y={18} r={2.500} f="#a5a9ab" /></g>],
  ["lab3", <Badge key="c" k="arrow" />],
  ["lab4", <Badge key="d" k="turn" />],
  ["lab5", <Badge key="e" k="pen" />],
];
for (const [k, body] of dimLabels) {
  icons[k] = <g transform="translate(-.5 0)"><Tag f="#e3e1d7" s="#cdcbc0" t="#b4b4ac" txt={k === "lab1" ? "ab" : "abc"} />{body}</g>;
}

const Icon = ({ n }: { n: string }) => (
  <div className="flex w-[33px] shrink-0 justify-center"><svg width="24" height="24" viewBox="0 0 24 24" className="overflow-visible">{icons[n]}</svg></div>
);
const Tri = ({ off = false }: { off?: boolean }) => (
  <div className="flex w-3 shrink-0 justify-center"><svg width="7" height="4" viewBox="0 0 8 4" preserveAspectRatio="none"><path d="M0 0h8L4 4z" fill={off ? "#aaa" : "#4d4d4d"} /></svg></div>
);
const Handle = () => (
  <div className="flex w-4 shrink-0 justify-end pr-[3px]">
    <svg width="5" height="18" viewBox="0 0 5 18">{[0, 3, 6, 9, 12, 15].map(y => <g key={y} fill="#bbb"><rect y={y} x={0} width={1} height={1} /><rect y={y + 1} x={3} width={1} height={1} /></g>)}</svg>
  </div>
);
const Sep = () => <div className="flex h-6 w-[7px] shrink-0 justify-center"><div className="w-px bg-[#cfcfcf]" /></div>;

/* Tokens: "|" handle, "/" separator, "v" arrow, "-" dimmed arrow, anything else an icon name */
const Items = ({ list }: { list: string }) => (
  <>{list.split(" ").map((k, i) => k === "|" ? <Handle key={i} /> : k === "/" ? <Sep key={i} /> : k === "v" ? <Tri key={i} /> : k === "-" ? <Tri key={i} off /> : <Icon key={i} n={k} />)}</>
);
const Bar = ({ children }: { children: React.ReactNode }) => (
  <div className="flex h-[39px] shrink-0 items-center border-b border-[#b5b5b5] bg-linear-to-b from-[#fcfcfc] to-[#eeeeee]">
    <div className="-ml-[3.5px] flex shrink-0 items-center"><Handle /></div>
    {children}
  </div>
);
const Spin = () => (
  <svg width="14" height="16" viewBox="0 0 14 16"><path d="M3 6h8L7 2zM3 10h8l-4 4z" fill="#4d4d4d" /></svg>
);
const field = "flex items-center rounded-[3px] border border-[#aaaaaa] bg-white";

const menus: [string, number, string][] = [
  ["Project", 3, "w-[51px]"], ["Edit", 0, "w-[34px]"], ["View", 0, "w-[39px]"], ["Layer", 0, "w-[42px]"], ["Settings", 0, "w-[56px]"], ["Plugins", 0, "w-[53px]"], ["Vector", 4, "w-[47px]"],
  ["Raster", 0, "w-[46px]"], ["Database", 0, "w-[62px]"], ["Web", 0, "w-[38px]"], ["Mesh", 0, "w-[43px]"], ["Processing", 3, "w-[71px]"], ["Help", 0, "w-[30px]"],
];

const Check = ({ on = true }: { on?: boolean }) => (
  <svg width="14" height="14" viewBox="0 0 14 14"><rect x=".5" y=".5" width="13" height="13" fill="#fff" stroke="#bdbdbd" />{on && <path d="M3.500 6.500 6 10l4.500-7" fill="none" stroke="#111" strokeWidth="1.900" />}</svg>
);

const layers = [
  { name: "Street", on: true, cls: "text-black", sym: <path d="M0 8h14" stroke="#c3c8cb" strokeWidth="1.500" /> },
  { name: "POI", on: true, cls: "font-semibold text-white underline", sym: <circle cx="8" cy="8" r="3.300" fill="#ff4a10" stroke="#7a3226" /> },
  { name: "Parcel", on: false, cls: "text-[#808080] italic", sym: <rect x=".5" y=".5" width="15" height="15" fill="#729b6f" stroke="#55714f" /> },
  { name: "Neigh", on: true, cls: "text-black", sym: <rect x="1" y="1" width="14" height="14" fill="#fff" stroke="#e31a1c" strokeWidth="2" /> },
];

const pts = [[474,260],[619,276],[613,308],[699,302],[508,315],[367,332],[615,353],[434,359],[394,367],[704,361],[763,382],[753,392],[588,388],[514,391],[341,399],[551,425],[628,429],[680,442],[765,447],[422,450],[341,466],[547,469],[486,475],[677,482],[818,487],[609,503],[269,524],[323,524],[449,530],[542,555],[676,552],[738,552],[484,564],[394,565],[608,573],[815,582],[270,596],[368,608],[466,621],[632,628],[756,629],[793,625],[570,639],[686,638],[427,659],[513,672],[743,677],[800,680],[364,683],[716,699],[470,726],[567,729],[809,744],[425,760],[648,773],[522,797],[588,799],[362,805],[466,840]];
const roads = [
  "M262 353 318 458 378 584 450 728 488 797 510 842",
  "M262 480 281 471 318 458 370 435 448 403 570 356 618 340 700 306 762 280 833 238",
  "M618 340 638 364 680 427 728 491 779 556 847 648 865 675 925 754 991 842",
  "M779 556.500 469 749 471 760",
  "M895 238 960 325 1010 388 1000 396 1004 402 1082 503 1244 724 1269 756",
  "M847 648 1060 516 1082 503 1440 282",
  "M1128 842 1223 786 1268 756 1440 649",
];

const PanelIcon = ({ children, cls = "w-[26px]" }: { children: React.ReactNode; cls?: string }) => (
  <div className={`flex shrink-0 justify-center ${cls}`}><svg width="16" height="16" viewBox="0 0 16 16" className="overflow-visible">{children}</svg></div>
);

export default function App() {
  return (
    <div className="flex h-[870px] w-[1440px] flex-col overflow-hidden bg-[#f0f0f0] font-['Noto_Sans',sans-serif] text-[11px] text-black">
      {/* title bar */}
      <div className="flex h-[23px] shrink-0 items-center bg-white">
        <svg width="16" height="16" viewBox="0 0 16 16" className="ml-[2px]">
          <circle cx="7.700" cy="7.700" r="5.800" fill="none" stroke="#76a832" strokeWidth="3.400" />
          <path d="M8 8h3l5 5v3h-3l-5-5z" fill="#5f9430" stroke="#fff" strokeWidth=".6" /><path d="M7 7h3.500L13 9.500 10 12 7 10z" fill="#ef8d24" />
        </svg>
        <span className="ml-[5px] pt-px font-['Open_Sans',sans-serif] text-[12px] tracking-[-0.38px]">*Untitled Project — QGIS</span>
        <div className="ml-auto flex items-center pr-[18px] pb-[3px]">
          <svg width="104" height="14" viewBox="0 0 104 14" fill="none" stroke="#111">
            <path d="M1 7.500h10" /><path d="M46.500 4.500h7v7h-7zM48.500 4.500v-2h7v7h-2" /><path d="M92 2.500l10 10M102 2.500l-10 10" />
          </svg>
        </div>
      </div>
      {/* menu bar */}
      <div className="flex h-5 shrink-0 items-center border-b border-[#d6d6d6] pt-px pl-[10px] font-['Open_Sans',sans-serif] text-[12px] tracking-[-0.3px]">
        {menus.map(([m, u, w]) => (
          <span key={m} className={`shrink-0 whitespace-nowrap ${w}`}>{m.slice(0, u)}<span className="underline underline-offset-2">{m[u]}</span>{m.slice(u + 1)}</span>
        ))}
      </div>
      {/* toolbars */}
      <Bar>
        <Items list="file folder save layoutNew layoutMgr style | hand pan zoomIn zoomOut zoomFull zoomSel zoomLayer zoomNative zoomLast zoomNext mapNew map3d bookmarkNew bookmarks clock refresh | identify abacus gear sigma table v measure v tip action - | | osm quickmap" />
      </Bar>
      <Bar>
        <Items list="dsm geopkg shpNew feather chip mesh virtualLayer | editsOff pencil saveEdits line - points vertex v formEdit trash cut copy paste undo redo | select v selectValue v deselect v selectLoc v | label diagram / labelPin labelRed / lab1 lab2 lab3 lab4 lab5 | globeAdd globeSearch globeBino | help" />
      </Bar>
      <Bar>
        <Items list="setSquare movePts - rotate scale simplify ringAdd partAdd ringFill ringDel partDel reshape offset reverse trim split splitParts merge mergeAttr rotateSym - |" />
        <div className="flex h-8 w-8 items-center justify-center rounded-[3px] border border-[#a8a8a8] bg-[#d8d8d8]"><Icon n="magnet" /></div>
        <Icon n="snapV" />
        <div className="ml-px flex h-8 w-8 items-center justify-center rounded-[3px] border border-[#a8a8a8] bg-[#d8d8d8]"><Icon n="snapPts" /></div>
        <div className={`${field} ml-[1px] h-5 w-[84px] pt-px pl-[5px]`}>
          <span className="flex-1">12</span>
          <svg width="13" height="10" viewBox="0 0 13 10" className="mr-[10px]"><path d="M4 0h9v10H4L0 5z" fill="#8c8c8c" /><path d="M5.500 2.500l5 5M10.500 2.500l-5 5" stroke="#fff" strokeWidth="1.300" /></svg>
          <div className="flex h-full items-center border-l border-[#aaa] bg-[#f8f8f8]"><Spin /></div>
        </div>
        <div className={`${field} mr-px ml-px h-[22px] w-[88px] bg-linear-to-b from-white to-[#f0f0f0] pl-[3px]`}>
          <span className="flex-1 pt-px">px</span><Tri /><div className="w-1" />
        </div>
        <Items list="topo overlap intersect trace v selfSnap" />
        <div className="w-px" />
        <Items list="| arcOff circleOff - ellipseOff - rectOff - polyOff - | circular" />
      </Bar>
      <Bar>
        <Items list="python modeler earth v buffer xyA plug hammer" />
        <svg width="22" height="22" viewBox="0 0 24 24" className="ml-1 shrink-0">{icons.reload}</svg>
        <span className="ml-[2px] w-[230px] shrink-0 pt-[2px] whitespace-nowrap tracking-[-0.23px]">Reload plugin: select_features_by_boundary</span>
        <Tri />
        <Items list="stackBO leaf qpink bToA selBoundary space columns xyz" />
        <div className="w-[87px]" />
        <Items list="| copyPts pinMap zoomPt zoomPts extent v wire xyOff wrench" />
        <div className="w-[11px]" /><Handle />
      </Bar>
      <Bar>
        <Items list="meshEdit meshSel - meshE meshV - | annLayer v annSel annPoly annLine annStar annText annCurve annBox annPic / annHtml v | gps1 targetOff / targetBox targetAdd gpsPts gpsTrack / info wrenchDark" />
      </Bar>

      {/* main area */}
      <div className="flex h-[604px] shrink-0">
        <div className="relative flex w-[257px] shrink-0 flex-col">
          <div className="flex h-[19px] items-center pr-[3px] pl-1">
            <span className="flex-1 pt-[2px] tracking-[-0.1px]">Layers</span>
            <svg width="25" height="11" viewBox="0 0 25 11" fill="none" stroke="#666">
              <rect x=".5" y=".5" width="10" height="10" rx="2" /><rect x="2.500" y="4.500" width="4" height="4" /><path d="M4.500 4V2.500h4v4H7" />
              <rect x="14.500" y=".5" width="10" height="10" rx="2" /><path d="M17 3l5 5M22 3l-5 5" strokeWidth="2" />
            </svg>
          </div>
          <div className="flex h-[30px] items-center pl-[2px]">
            <PanelIcon><path d="M1 8l4-3 4 5-4 3c-2-1-4-3-4-5z" fill="#f39b2b" /><path d="M1 8l3-2 1 6c-2-1-3-2-4-4z" fill="#e0503b" /><path d="M6 12l3-4 2 2-4 3z" fill="#7baed9" /><path d="M7 7l6-5 2 1-5 7z" fill="#c79a55" stroke="#a27736" strokeWidth=".5" /></PanelIcon>
            <PanelIcon><path d="M5 3h6v9H5zM2.500 6H5M2.500 6v8h8v-2M8 1h5v10" fill="none" stroke="#777" /><path d="M8 10V3M6 5l2-3 2 3" fill="none" stroke="#446f9e" /><rect x="9" y="10" width="5.500" height="5.500" rx="1" fill="#5b9060" /><path d="M11.750 11v3.500M10 12.750h3.500" stroke="#fff" /></PanelIcon>
            <PanelIcon><path d="M0 8q7-8 14 0-7 6-14 0z" fill="#f4f4f4" stroke="#8b9398" /><circle cx="7" cy="7.500" r="3" fill="#6f9cc5" stroke="#41637f" /><circle cx="7" cy="7.500" r="1.200" fill="#222" /><path d="M12 12.500h5L14.500 15z" fill="#444" /></PanelIcon>
            <PanelIcon><path d="M0 3h14L9 9v6l-3-1V9z" fill="#6c9bcf" stroke="#446f9e" strokeWidth=".8" /><path d="M0 1h14v2H0z" fill="#f3c21c" /><path d="M11.500 12.500h5L14 15z" fill="#444" /></PanelIcon>
            <PanelIcon cls="w-[22px]"><text x="0" y="11" fontSize="15" fill="#73457c" fontFamily="DejaVu Serif, serif">ε</text><path d="M8 9h6v6h-2v-3h-2v3H8z" fill="#bdbdbd" stroke="#aaa" strokeWidth=".6" /></PanelIcon>
            <Tri />
            <PanelIcon><path d="M1 2.500h5M3 3v9M3 6h3M3 11h3" stroke="#777" fill="none" /><path d="M5 5h3v3H5zM5 10h3v3H5z" fill="#ffd665" stroke="#b78518" /><path d="M9.500 2h3v8H15l-4 4-4-4h2.500z" fill="#5e90c7" stroke="#3c6594" strokeWidth=".6" /></PanelIcon>
            <PanelIcon><path d="M1 2.500h5M3 3v9M3 6h3M3 11h3" stroke="#777" fill="none" /><path d="M4 5h3v3H4zM4 10h3v3H4z" fill="#ffd665" stroke="#b78518" /><path d="M9.500 14h3V6H15l-4-4.500L7 6h2.500z" fill="#5e90c7" stroke="#3c6594" strokeWidth=".6" /></PanelIcon>
            <PanelIcon cls="w-[22px]"><rect x="1.500" y="1.500" width="11" height="11" fill="#eee" stroke="#777" /><rect x="9.500" y="10.500" width="5" height="4" rx="1" fill="#fff" stroke="#d94b4b" /><path d="M10 12.500h4" stroke="#d94b4b" /></PanelIcon>
          </div>
          <div className="mt-[1px] h-[529px] w-[256px] border border-[#b0b0b0] bg-white">
            {layers.map((l, i) => (
              <div key={l.name} className={`flex h-[18px] items-center pl-[23px] ${i === 1 ? "bg-linear-to-r from-[#0078d7] to-[#1a84dc]" : ""}`}>
                <Check on={l.on} />
                <svg width="16" height="16" viewBox="0 0 16 16" className="ml-[6px]">{l.sym}</svg>
                <span className={`${i === 0 ? "ml-1" : "ml-[6px]"} pt-px text-[12px] leading-[18px] font-bold tracking-[-0.2px] ${l.cls}`}>{l.name}</span>
              </div>
            ))}
          </div>
          <div className="absolute top-[65px] left-0 h-[26px] w-[257px] border-3 border-[#ec1c24]" />
          <div className="mt-px flex h-6 w-[256px] items-start">
            <div className="flex h-[21px] w-[83px] shrink-0 items-center justify-center rounded-b-[2px] border border-[#bdbdbd] bg-[#dcdcdc] pt-px pr-[3px] tracking-[-0.25px]">Layer Order</div>
            <div className="flex h-[21px] w-[63px] shrink-0 items-center justify-center border border-l-0 border-[#bdbdbd] bg-[#dcdcdc] pt-px pr-[3px] tracking-[-0.3px]">Browser</div>
            <div className="flex h-[23px] w-[55px] shrink-0 items-center justify-center rounded-b-[2px] border border-t-0 border-[#b5b5b5] bg-[#fafafa] pt-px pr-0.5">Layers</div>
            <div className="h-px flex-1 bg-[#b5b5b5]" />
          </div>
        </div>
        <div className="flex w-[5px] shrink-0 items-center justify-center"><div className="h-4 border-l border-dotted border-[#bbb]" /></div>
        <div className="relative h-[604px] w-[1178px] border border-[#b0b0b0] bg-white">
          <svg width="1176" height="602" viewBox="263 239 1176 602" className="block">
            <path d="M262 415 269 405 287 448" fill="none" stroke="#8d8d8d" />
            {roads.map(d => <path key={d} d={d} fill="none" stroke="#e61b20" strokeWidth="4" strokeLinejoin="round" />)}
            {pts.map(([x, y]) => <circle key={`${x}-${y}`} cx={x} cy={y} r="3.700" fill="#ff4305" stroke="#3a2a25" />)}
            <circle cx="539" cy="518.500" r="28" fill="none" stroke="#0da2e6" strokeWidth="2.900" />
            <path d="M528 518.500h23M539.500 508v21" stroke="#000" strokeWidth="3" />
          </svg>
          <div className="absolute top-[71px] left-[3px] font-['Lato',sans-serif] text-[14.5px] leading-[19px] font-bold whitespace-nowrap tracking-[0.48px]">Select layer for Boundary Selection</div>
          <div className="absolute top-[273px] left-[313px] font-['Lato',sans-serif] text-[14.5px] leading-[19px] font-bold whitespace-nowrap tracking-[0.5px]">Click on the boundary within which<br />you want to select the features</div>
        </div>
      </div>

      {/* status bar */}
      <div className="flex h-7 shrink-0 items-center pt-px whitespace-nowrap">
        <div className={`${field} ml-1 h-[22px] w-[200px] pl-2 text-[#7d7d7d]`}>
          <svg width="13" height="13" viewBox="0 0 13 13" fill="none" stroke="#888"><circle cx="5" cy="5" r="4" /><path d="M8 8l4.500 4.500" strokeWidth="1.400" /></svg>
          <span className="ml-[6px] tracking-[-0.05px]">Type to locate (Ctrl+K)</span>
        </div>
        <span className="ml-[414px] w-[57px] tracking-[-0.4px]">Coordinate</span>
        <div className={`${field} h-[22px] w-[124px] pl-[6px]`}>24.75647°, 46.75536°</div>
        <svg width="16" height="16" viewBox="0 0 16 16" className="ml-1" fill="none" stroke="#333"><path d="M2 4c2-3 7-3 8 1l-6 5zM4 10l3 4c3 1 6-1 6-4l-3-4M3 3l5 6M6 2l4 5M2 6l4 4M12 3l3-2M11 5l4-1" strokeWidth="1.200" /><circle cx="9" cy="11" r="2" /></svg>
        <span className="ml-3 w-[29px] tracking-[-0.25px]">Scale</span>
        <div className={`${field} h-[22px] w-[81px] pl-[3px]`}><span className="flex-1 tracking-[-0.1px]">1:20314</span><div className="flex h-full w-5 items-center justify-center border-l border-[#aaa] bg-[#f7f7f7]"><Tri /></div></div>
        <svg width="14" height="16" viewBox="0 0 14 16" className="ml-[11px]"><path d="M3.500 8V4.500c0-4 7-4 7 0V8" fill="none" stroke="#999" strokeWidth="1.800" /><rect x="1" y="7" width="12" height="8" rx="1" fill="#5a5a5a" /></svg>
        <span className="ml-[7px] w-[48px] tracking-[-0.6px]">Magnifier</span>
        <div className={`${field} h-[20px] w-[84px] pl-1`}><span className="flex-1">100%</span><div className="flex h-full items-center border-l border-[#aaa] bg-[#f7f7f7]"><Spin /></div></div>
        <span className="ml-2 w-[51px] tracking-[-0.2px]">Rotation</span>
        <div className={`${field} h-[20px] w-[84px] pl-1`}><span className="flex-1">0.0 °</span><div className="flex h-full items-center border-l border-[#aaa] bg-[#f7f7f7]"><Spin /></div></div>
        <div className="ml-[6px]"><Check /></div>
        <span className="ml-1 w-[51px] tracking-[-0.25px]">Render</span>
        <svg width="16" height="15" viewBox="0 0 24 24" className="shrink-0 opacity-75">{icons.wire}</svg>
        <span className="ml-px w-[76px] tracking-[-0.2px]">EPSG:4326</span>
        <svg width="17" height="16" viewBox="0 0 17 16"><path d="M8 1c5 0 8 2 8 6 0 3-1 4-2 5l1 3-4-2c-6 1-10-2-10-6s3-6 7-6z" fill="#5b5b5b" /></svg>
      </div>
    </div>
  );
}
